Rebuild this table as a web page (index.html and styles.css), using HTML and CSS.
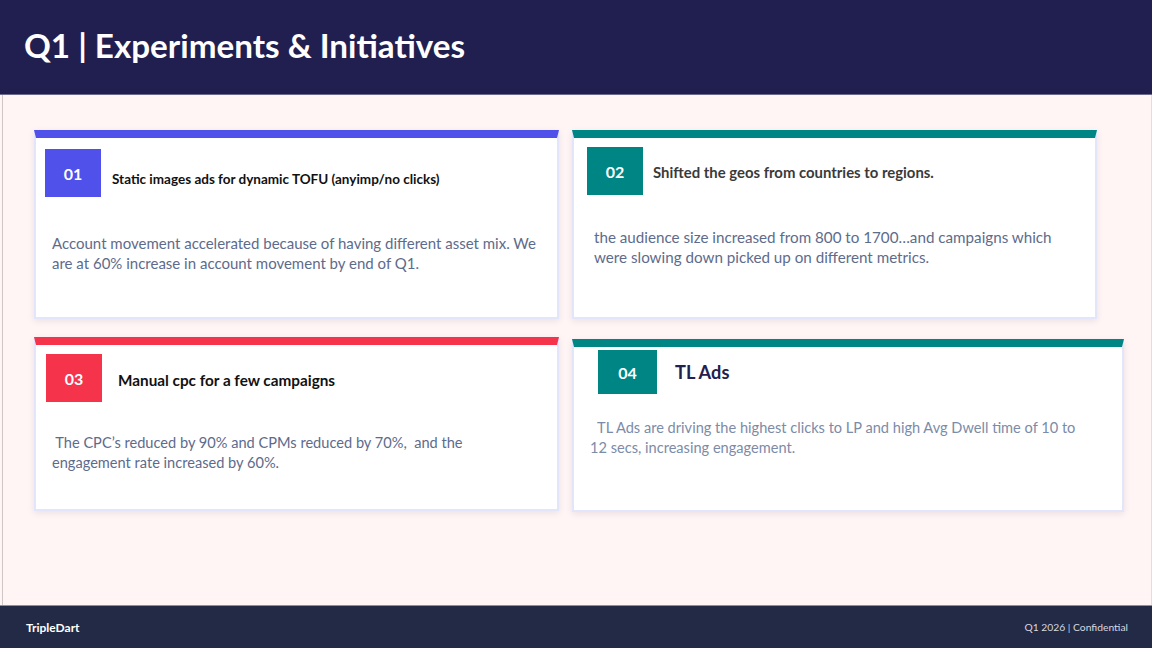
FILE: index.html
```html
<!DOCTYPE html>
<html lang="en">
<head>
<meta charset="utf-8">
<title>Q1 | Experiments &amp; Initiatives</title>
<link rel="stylesheet" href="styles.css">
</head>
<body>
<div class="slide">
  <header class="header">
    <h1 class="title">Q1 | Experiments &amp; Initiatives</h1>
  </header>
  <main class="content">
    <div class="row row-top">
      <section class="card card-1">
        <div class="card-head">
          <div class="badge badge-1">01</div>
          <h2 class="card-title title-1">Static images ads for dynamic TOFU (anyimp/no clicks)</h2>
        </div>
        <p class="card-text text-1">Account movement accelerated because of having different asset mix. We are at 60% increase in account movement by end of Q1.</p>
      </section>
      <section class="card card-2">
        <div class="card-head">
          <div class="badge badge-2">02</div>
          <h2 class="card-title title-2">Shifted the geos from countries to regions.</h2>
        </div>
        <p class="card-text text-2">the audience size increased from 800 to 1700…and campaigns which were slowing down picked up on different metrics.</p>
      </section>
    </div>
    <div class="row row-bottom">
      <section class="card card-3">
        <div class="card-head">
          <div class="badge badge-3">03</div>
          <h2 class="card-title title-3">Manual cpc for a few campaigns</h2>
        </div>
        <p class="card-text text-3">&nbsp;The CPC’s reduced by 90% and CPMs reduced by 70%,&nbsp; and the engagement rate increased by 60%.</p>
      </section>
      <section class="card card-4">
        <div class="card-head">
          <div class="badge badge-4">04</div>
          <h2 class="card-title title-4">TL Ads</h2>
        </div>
        <p class="card-text text-4">&nbsp; TL Ads are driving the highest clicks to LP and high Avg Dwell time of 10 to 12 secs, increasing engagement.</p>
      </section>
    </div>
  </main>
  <footer class="footer">
    <span class="brand">TripleDart</span>
    <span class="meta">Q1 2026 | Confidential</span>
  </footer>
</div>
</body>
</html>
```
FILE: styles.css
```css
* { box-sizing: border-box; }
html, body {
  margin: 0;
  padding: 0;
}
body {
  font-family: "Lato", "Open Sans", sans-serif;
  background: #fff5f5;
}
.slide {
  width: 1152px;
  height: 648px;
  display: flex;
  flex-direction: column;
  overflow: hidden;
}
.header {
  height: 95px;
  background: #211f50;
  border-bottom: 1px solid #6e6a8c;
  display: flex;
  align-items: center;
  padding: 0 0 4px 24px;
  flex-shrink: 0;
}
.title {
  margin: 0;
  color: #ffffff;
  font-weight: 700;
  font-size: 33.2px;
  letter-spacing: 0;
}
.content {
  flex: 1;
  background: #fff5f5;
  border-left: 1px solid #cfc6c8;
  border-right: 1px solid #e6dcdd;
  margin-left: 2px;
  padding: 35px 0 0 31px;
  display: flex;
  flex-direction: column;
  gap: 18px;
}
.row {
  display: flex;
  gap: 13px;
  align-items: flex-start;
}
.card {
  background: #ffffff;
  border: 2px solid #e3e6fa;
  border-top-width: 8px;
  box-shadow: 0 2px 6px rgba(150, 130, 150, 0.18);
}
.card-1 { width: 525px; height: 189px; border-top-color: #5050ea; }
.card-2 { width: 525px; height: 189px; border-top-color: #008585; }
.card-3 { width: 525px; height: 174px; border-top-color: #f5334b; }
.card-4 { width: 552px; height: 173px; border-top-color: #008585; margin-top: 2px; }

.card-head {
  display: flex;
  align-items: center;
}
.badge {
  color: #ffffff;
  font-weight: 700;
  font-size: 16px;
  display: flex;
  align-items: center;
  justify-content: center;
  flex-shrink: 0;
}
.badge-1 { background: #5050ea; width: 56px; height: 48px; }
.badge-2 { background: #008585; width: 56px; height: 48px; }
.badge-3 { background: #f5334b; width: 56px; height: 48px; }
.badge-4 { background: #008585; width: 59px; height: 44px; }

.card-1 .card-head { padding: 11px 0 0 9px; }
.card-2 .card-head { padding: 9px 0 0 13px; }
.card-3 .card-head { padding: 9px 0 0 10px; }
.card-4 .card-head { padding: 3px 0 0 24px; }

.card-title {
  margin: 0;
  font-weight: 700;
}
.title-1 { font-size: 13.5px; color: #111111; margin: 12px 0 0 11px; }
.title-2 { font-size: 14.9px; color: #3a3a3a; margin: 2px 0 0 10px; }
.title-3 { font-size: 15.3px; color: #111111; margin: 4px 0 0 16px; }
.title-4 { font-size: 18.2px; color: #22204f; margin: 0 0 0 18px; }

.card-text {
  margin: 0;
  line-height: 20px;
  color: #5d6b8c;
}
.text-1 { font-size: 15px; padding: 36px 15px 0 16px; }
.text-2 { font-size: 15.2px; padding: 32px 26px 0 20px; }
.text-3 { font-size: 14.6px; padding: 31px 65px 0 16px; }
.text-4 { font-size: 14.6px; padding: 24px 43px 0 16px; color: #7c8ba8; }

.footer {
  height: 43px;
  flex-shrink: 0;
  background: #232a45;
  border-top: 1px solid #8a8fa3;
  display: flex;
  align-items: center;
  justify-content: space-between;
  padding: 0 24px 0 26px;
  color: #ffffff;
}
.brand {
  font-size: 12px;
  font-weight: 700;
}
.meta {
  font-size: 10.3px;
  color: #d6d8e0;
}
```
